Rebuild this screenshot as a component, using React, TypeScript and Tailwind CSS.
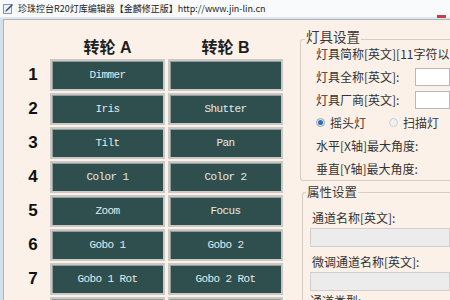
import React from "react";

const rowsA = ["Dimmer", "Iris", "Tilt", "Color 1", "Zoom", "Gobo 1", "Gobo 1 Rot", ""];
const rowsB = ["", "Shutter", "Pan", "Color 2", "Focus", "Gobo 2", "Gobo 2 Rot", ""];

const cjk = { fontFamily: '"Noto Sans CJK SC", "Liberation Sans", sans-serif' };
const head = { fontFamily: '"Liberation Sans", "Noto Sans CJK SC", sans-serif' };

function WheelButton({ label }: { label: string }) {
  return (
    <div className="w-[115px] h-[32px] border-2 border-[#cbc9c6] bg-[#2f4f4f] shadow-[inset_1px_1px_0_#8f9a99] flex items-center justify-center">
      <span
        className="text-[11px] tracking-[-0.6px] text-[#e6eae8] whitespace-pre"
        style={{ fontFamily: '"Liberation Mono", monospace' }}
      >
        {label}
      </span>
    </div>
  );
}

export default function App() {
  return (
    <div className="w-[450px] h-[300px] overflow-hidden bg-[#fbf1e8] flex flex-col" style={cjk}>
      {/* title bar */}
      <div className="h-[17px] bg-[#f9fafc] flex items-center pl-[3px] relative shrink-0">
        <svg width="11" height="11" viewBox="0 0 11 11" className="shrink-0">
          <rect x="0.5" y="1.5" width="8" height="9" fill="#e9f0f8" stroke="#7f97b4" />
          <path d="M3 8 L9.5 1.5" stroke="#2c4a78" strokeWidth="1.5" />
          <path d="M2.5 8.5 L3.5 7.5" stroke="#c04040" strokeWidth="1" />
        </svg>
        <span className="ml-[4px] text-[9px] leading-none text-[#222] whitespace-nowrap">
          珍珠控台R20灯库编辑器【金麟修正版】http://www.jin-lin.cn
        </span>
        <div className="absolute right-[4px] top-[15px] w-[9px] h-[3px] bg-[#d03a3a]" />
      </div>
      <div className="h-[2px] bg-[#dfe6ef] shrink-0" />
      {/* body */}
      <div className="flex flex-1 min-h-0">
        <div className="w-[3px] bg-[#d5e0ed] shrink-0" />
        <div className="flex-1 flex border-l border-t border-[#aab4c0] min-w-0">
          {/* left wheel table */}
          <div className="w-[288px] shrink-0 pl-[12px]">
            <div className="h-[39px] pt-[16px] flex" style={head}>
              <div className="w-[34px]" />
              <div className="w-[115px] flex items-center justify-center text-[16px] font-bold text-[#1e1e1e] leading-[23px]">
                转轮 A
              </div>
              <div className="w-[3px]" />
              <div className="w-[115px] flex items-center justify-center text-[16px] font-bold text-[#1e1e1e] leading-[23px]">
                转轮 B
              </div>
            </div>
            <div className="flex flex-col gap-[2px]">
              {rowsA.map((a, i) => (
                <div key={i} className="flex items-center h-[32px]">
                  <div
                    className="w-[34px] text-center text-[17px] leading-[20px] font-bold text-[#111]"
                    style={{ fontFamily: '"Liberation Sans", Arial, sans-serif' }}
                  >
                    {i < 7 ? i + 1 : ""}
                  </div>
                  <WheelButton label={a} />
                  <div className="w-[3px]" />
                  <WheelButton label={rowsB[i]} />
                </div>
              ))}
            </div>
          </div>
          {/* right settings */}
          <div className="flex-1 min-w-0 pl-[8px] text-[12px] leading-[16px] text-[#333]">
            <div className="relative mt-[19px] h-[142px] border border-r-0 border-[#d6cec6] rounded-tl-[3px] rounded-bl-[3px] pl-[15px] pt-[2px]">
              <span className="absolute left-[4px] top-[-11px] px-[1px] bg-[#fbf1e8] text-[13.5px] leading-[14px] text-[#3a3a3a]">
                灯具设置
              </span>
              <div className="h-[23px] flex items-center whitespace-nowrap overflow-hidden">灯具简称[英文][11字符以内]</div>
              <div className="h-[23px] flex items-center whitespace-nowrap">
                <span className="w-[99px] shrink-0">灯具全称[英文]:</span>
                <div className="h-[18px] flex-1 bg-white border border-[#b5b9bf]" />
              </div>
              <div className="h-[23px] flex items-center whitespace-nowrap">
                <span className="w-[99px] shrink-0">灯具厂商[英文]:</span>
                <div className="h-[18px] flex-1 bg-white border border-[#b5b9bf]" />
              </div>
              <div className="h-[23px] flex items-center whitespace-nowrap">
                <span className="w-[9px] h-[9px] rounded-full border border-[#9aa7b5] bg-[#dfe8f2] flex items-center justify-center">
                  <span className="w-[5px] h-[5px] rounded-full bg-[#2f6fb3]" />
                </span>
                <span className="ml-[5px]">摇头灯</span>
                <span className="ml-[23px] w-[9px] h-[9px] rounded-full border border-[#c9ced4] bg-[#eef0f2]" />
                <span className="ml-[5px]">扫描灯</span>
              </div>
              <div className="h-[23px] flex items-center whitespace-nowrap">水平[X轴]最大角度:</div>
              <div className="h-[23px] flex items-center whitespace-nowrap">垂直[Y轴]最大角度:</div>
            </div>
            <div className="relative mt-[11px] ml-[2px] h-[120px] border border-r-0 border-b-0 border-[#d6cec6] rounded-tl-[3px] pl-[7px] pt-[15px]">
              <span className="absolute left-[3px] top-[-8px] px-[1px] bg-[#fbf1e8] text-[12.5px] leading-[14px] text-[#3a3a3a]">
                属性设置
              </span>
              <div className="h-[20px] flex items-center pl-[2px] whitespace-nowrap">通道名称[英文]:</div>
              <div className="h-[19px] bg-[#ececec] border border-[#cfcfcf]" />
              <div className="h-[23px] flex items-end pl-[2px] whitespace-nowrap">微调通道名称[英文]:</div>
              <div className="mt-[2px] h-[19px] bg-[#ececec] border border-[#cfcfcf]" />
              <div className="h-[18px] flex items-end whitespace-nowrap">通道类型:</div>
            </div>
          </div>
        </div>
      </div>
    </div>
  );
}
